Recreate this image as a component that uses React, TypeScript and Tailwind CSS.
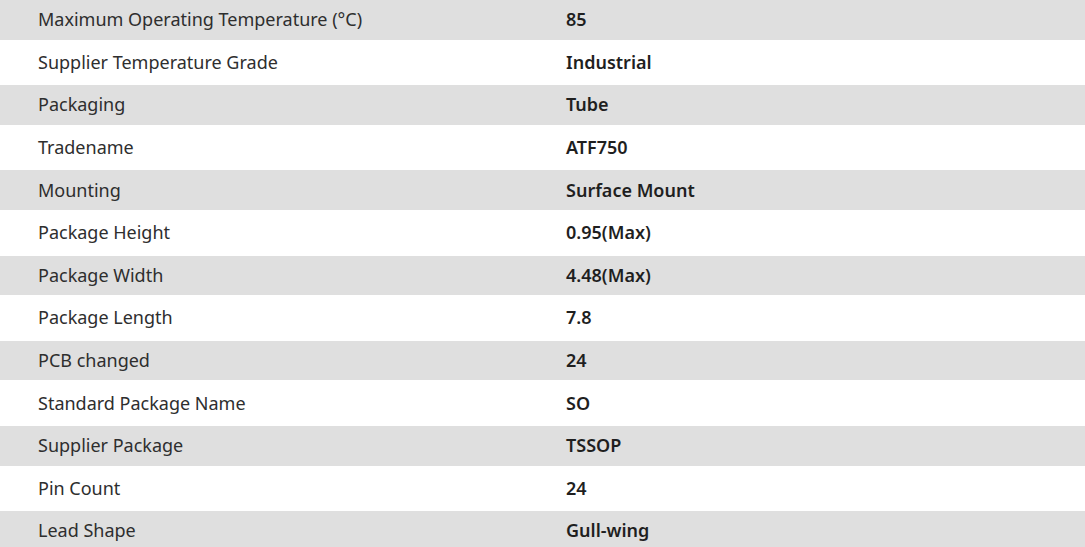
const rows: [string, string][] = [
  ["Maximum Operating Temperature (°C)", "85"],
  ["Supplier Temperature Grade", "Industrial"],
  ["Packaging", "Tube"],
  ["Tradename", "ATF750"],
  ["Mounting", "Surface Mount"],
  ["Package Height", "0.95(Max)"],
  ["Package Width", "4.48(Max)"],
  ["Package Length", "7.8"],
  ["PCB changed", "24"],
  ["Standard Package Name", "SO"],
  ["Supplier Package", "TSSOP"],
  ["Pin Count", "24"],
  ["Lead Shape", "Gull-wing"],
];

export default function App() {
  return (
    <div className="w-[1085px] h-[547px] overflow-hidden bg-white font-['Noto_Sans',sans-serif]">
      {rows.map(([label, value], i) => (
        <div
          key={label}
          className={
            i % 2 === 0
              ? "flex items-center h-[39.6px] bg-[#dfdfdf]"
              : "flex items-center h-[45.6px] bg-white"
          }
        >
          <div className="w-[566px] pl-[38px] text-[18px] text-[#2e2e2e]">{label}</div>
          <div className="flex-1 text-[18px] font-semibold text-[#1f1f1f]">{value}</div>
        </div>
      ))}
    </div>
  );
}
